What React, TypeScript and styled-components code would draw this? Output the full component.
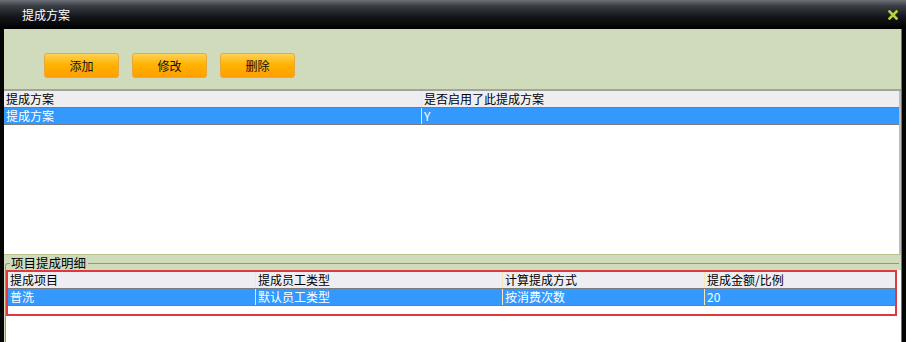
import React from 'react';
import styled, { createGlobalStyle } from 'styled-components';

const GlobalStyle = createGlobalStyle`
  html, body {
    margin: 0;
    padding: 0;
    background: #000;
  }
  body {
    font-family: "Noto Sans CJK SC", "Liberation Sans", sans-serif;
    font-size: 12px;
  }
`;

const Window = styled.div`
  width: 906px;
  height: 342px;
  display: flex;
  flex-direction: column;
  background: #050505;
  overflow: hidden;
`;

const TitleBar = styled.div`
  height: 29px;
  flex: none;
  display: flex;
  align-items: center;
  justify-content: space-between;
  padding: 0 8px 0 22px;
  background: linear-gradient(#6c7177 0px, #3a3e44 6px, #15181c 16px, #000 29px);
  color: #fff;
  font-size: 12px;
`;

const CloseIcon = () => (
  <svg width="10" height="10" viewBox="0 0 10 10">
    <path d="M1.5 1.5 L8.5 8.5 M8.5 1.5 L1.5 8.5" stroke="#b2d33a" strokeWidth="2.6" strokeLinecap="square" />
  </svg>
);

const Body = styled.div`
  flex: 1;
  display: flex;
  flex-direction: column;
  margin: 0 4px 0 4px;
  background: #fff;
  border-right: 1px solid #6c7d50;
`;

const Toolbar = styled.div`
  height: 62px;
  flex: none;
  display: flex;
  gap: 13px;
  padding: 24px 0 0 40px;
  box-sizing: border-box;
  background: #cfdbbb;
  border-bottom: 2px solid #a0a49a;
`;

const ToolButton = styled.button`
  width: 75px;
  height: 25px;
  padding: 0;
  border: 1px solid #e7a93c;
  border-radius: 3px;
  background: linear-gradient(#ffd155 0%, #ffb400 45%, #ff9e00 100%);
  color: #111;
  font-family: inherit;
  font-size: 12px;
`;

const Grid = styled.div`
  display: flex;
  flex-direction: column;
`;

const Row = styled.div<{ $cols: string; $head?: boolean; $sel?: boolean }>`
  display: grid;
  grid-template-columns: ${p => p.$cols};
  height: 16px;
  line-height: 16px;
  font-size: 12px;
  background: ${p => (p.$head ? '#eeeef2' : p.$sel ? '#3399ff' : '#fff')};
  color: ${p => (p.$sel ? '#fff' : '#000')};
  border-bottom: 1px solid ${p => (p.$head || p.$sel ? '#7c7c7c' : 'transparent')};
`;

const Cell = styled.div<{ $sel?: boolean }>`
  padding-left: 2px;
  white-space: nowrap;
  & + & {
    border-left: 1px solid ${p => (p.$sel ? '#f6e6b8' : '#8a8a8a')};
  }
`;

const TopGrid = styled(Grid)`
  height: 163px;
  flex: none;
  border-right: 2px solid #bdbdbd;
`;

const GroupBox = styled.div`
  flex: 1;
  display: flex;
  flex-direction: column;
  background: #cfdbbb;
  border-top: 1px solid #b6c48e;
  padding: 0 0 0 1px;
`;

const Legend = styled.div`
  height: 15px;
  display: flex;
  align-items: center;
  font-size: 12.5px;
  color: #000;
  &::before {
    content: '';
    width: 5px;
    height: 8px;
    margin-top: 8px;
    border-top: 1px solid #8ea060;
    border-left: 1px solid #8ea060;
    border-top-left-radius: 3px;
    box-sizing: border-box;
  }
  &::after {
    content: '';
    flex: 1;
    height: 1px;
    margin: 1px 2px 0 2px;
    background: #8ea060;
  }
`;

const LegendText = styled.span`
  padding-left: 1px;
  line-height: 15px;
`;

const DetailFrame = styled.div`
  flex: 1;
  display: flex;
  flex-direction: column;
  background: #fff;
  border-left: 1px solid #8ea060;
`;

const Highlight = styled.div`
  height: 46px;
  box-sizing: border-box;
  border: 2px solid #e0383c;
  margin-right: 4px;
  background: #fff;
`;

const topCols = '417px 1fr';
const detailCols = '247px 247px 202px 1fr';

export default function App() {
  return (
    <>
      <GlobalStyle />
      <Window>
        <TitleBar>
          <span>提成方案</span>
          <CloseIcon />
        </TitleBar>
        <Body>
          <Toolbar>
            <ToolButton>添加</ToolButton>
            <ToolButton>修改</ToolButton>
            <ToolButton>删除</ToolButton>
          </Toolbar>
          <TopGrid>
            <Row $cols={topCols} $head>
              <Cell>提成方案</Cell>
              <Cell>是否启用了此提成方案</Cell>
            </Row>
            <Row $cols={topCols} $sel>
              <Cell $sel>提成方案</Cell>
              <Cell $sel>Y</Cell>
            </Row>
          </TopGrid>
          <GroupBox>
            <Legend>
              <LegendText>项目提成明细</LegendText>
            </Legend>
            <DetailFrame>
              <Highlight>
                <Row $cols={detailCols} $head>
                  <Cell>提成项目</Cell>
                  <Cell>提成员工类型</Cell>
                  <Cell>计算提成方式</Cell>
                  <Cell>提成金额/比例</Cell>
                </Row>
                <Row $cols={detailCols} $sel>
                  <Cell $sel>普洗</Cell>
                  <Cell $sel>默认员工类型</Cell>
                  <Cell $sel>按消费次数</Cell>
                  <Cell $sel>20</Cell>
                </Row>
              </Highlight>
            </DetailFrame>
          </GroupBox>
        </Body>
      </Window>
    </>
  );
}
